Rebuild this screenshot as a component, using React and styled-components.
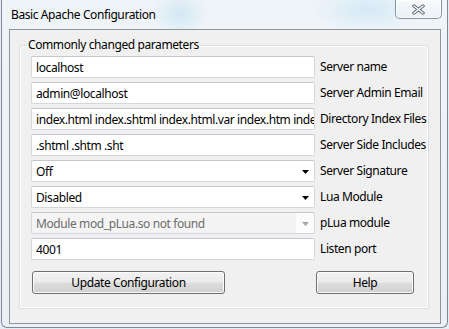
import React from 'react';
import styled, { createGlobalStyle } from 'styled-components';

const Global = createGlobalStyle`
  html, body { margin: 0; padding: 0; background: #e4edf5; }
  body { font-family: "Noto Sans", "Open Sans", sans-serif; font-size: 12px; letter-spacing: -0.4px; color: #000; }
  * { box-sizing: border-box; }
`;

const Window = styled.div`
  width: 447px;
  height: 328px;
  margin-left: 1px;
  display: flex;
  flex-direction: column;
  border: 1px solid #7f8993;
  border-top: none;
  border-radius: 0 0 6px 6px;
  padding: 0 6px 3px 7px;
  background:
    radial-gradient(ellipse 28px 22px at 178px 14px, rgba(175, 218, 240, 0.45), transparent),
    radial-gradient(ellipse 55px 22px at 365px 10px, rgba(185, 224, 245, 0.5), transparent),
    linear-gradient(#eff4f8, #ebf0f5);
`;

const TitleBar = styled.div`
  height: 29px;
  display: flex;
  align-items: flex-start;
  flex: none;
`;

const Title = styled.div`
  margin: 7px 0 0 2px;
  line-height: 16px;
  font-size: 12px;
`;

const CloseButton = styled.div`
  margin-left: auto;
  margin-right: -1px;
  width: 47px;
  height: 19px;
  border: 1px solid #8a949e;
  border-top: none;
  border-radius: 0 0 5px 5px;
  background: linear-gradient(rgba(255, 255, 255, 0.55), rgba(236, 241, 246, 0.6));
  box-shadow: inset 0 0 0 1px rgba(255, 255, 255, 0.6);
  display: flex;
  align-items: center;
  justify-content: center;
`;

const Client = styled.div`
  flex: 1;
  border: 1px solid #8d959d;
  background: #f0f0f0;
  display: flex;
  flex-direction: column;
`;

const Group = styled.fieldset`
  margin: 7px 11px 0 9px;
  padding: 3px 10px 14px 11px;
  border: 1px solid #d5dfe5;
  border-radius: 3px;
  box-shadow: inset 0 0 0 1px #fff;
  min-width: 0;
`;

const Legend = styled.legend`
  padding: 0 1px;
  margin-left: -4px;
  line-height: 16px;
  font-size: 12px;
`;

const Rows = styled.div`
  display: grid;
  grid-template-columns: 284px auto;
  column-gap: 5px;
  row-gap: 4px;
  align-items: center;
`;

const Field = styled.div`
  height: 22px;
  display: flex;
  align-items: center;
  padding: 0 0 0 4px;
  border: 1px solid #d4d7dc;
  border-top-color: #c4c7cd;
  border-radius: 2px;
  background: ${(p) => (p.$disabled ? 'linear-gradient(to right, #f4f4f4 264px, #fbfbfb 264px)' : '#fff')};
  color: ${(p) => (p.$disabled ? '#6d6d6d' : '#000')};
  overflow: hidden;
  white-space: nowrap;
`;

const FieldText = styled.span`
  flex: 1;
  min-width: 0;
  overflow: hidden;
  white-space: nowrap;
`;

const Arrow = styled.svg`
  flex: none;
  margin: 1px 5px 0 6px;
`;

const Label = styled.div`
  line-height: 22px;
  white-space: nowrap;
`;

const ButtonRow = styled.div`
  display: flex;
  gap: 91px;
  margin: 11px 0 0 1px;
`;

const Button = styled.button`
  width: ${(p) => p.$w}px;
  height: 23px;
  border: 1px solid #707070;
  border-radius: 3px;
  background: linear-gradient(#f2f2f2 0%, #ebebeb 48%, #dddddd 52%, #cfcfcf 100%);
  box-shadow: inset 0 0 0 1px #fbfbfb;
  font-family: inherit;
  font-size: 12px;
  letter-spacing: inherit;
  color: #000;
  padding: 0;
`;

const TextRow = ({ value, label }) => (
  <>
    <Field>
      <FieldText>{value}</FieldText>
    </Field>
    <Label>{label}</Label>
  </>
);

const ComboRow = ({ value, label, disabled }) => (
  <>
    <Field $disabled={disabled}>
      <FieldText>{value}</FieldText>
      <Arrow width="7" height="4" viewBox="0 0 7 4">
        <polygon points="0,0 7,0 3.5,4" fill={disabled ? '#a6a6a6' : '#000'} />
      </Arrow>
    </Field>
    <Label>{label}</Label>
  </>
);

export default function App() {
  return (
    <>
      <Global />
      <Window>
        <TitleBar>
          <Title>Basic Apache Configuration</Title>
          <CloseButton>
            <svg width="13" height="11" viewBox="0 0 13 11">
              <line x1="2" y1="2" x2="11" y2="9" stroke="#5f6b77" strokeWidth="3.4" strokeLinecap="round" />
              <line x1="11" y1="2" x2="2" y2="9" stroke="#5f6b77" strokeWidth="3.4" strokeLinecap="round" />
              <line x1="2" y1="2" x2="11" y2="9" stroke="#fff" strokeWidth="1.4" strokeLinecap="round" />
              <line x1="11" y1="2" x2="2" y2="9" stroke="#fff" strokeWidth="1.4" strokeLinecap="round" />
            </svg>
          </CloseButton>
        </TitleBar>
        <Client>
          <Group>
            <Legend>Commonly changed parameters</Legend>
            <Rows>
              <TextRow value="localhost" label="Server name" />
              <TextRow value="admin@localhost" label="Server Admin Email" />
              <TextRow value="index.html index.shtml index.html.var index.htm index.php" label="Directory Index Files" />
              <TextRow value=".shtml .shtm .sht" label="Server Side Includes" />
              <ComboRow value="Off" label="Server Signature" />
              <ComboRow value="Disabled" label="Lua Module" />
              <ComboRow value="Module mod_pLua.so not found" label="pLua module" disabled />
              <TextRow value="4001" label="Listen port" />
            </Rows>
            <ButtonRow>
              <Button $w={193}>Update Configuration</Button>
              <Button $w={98}>Help</Button>
            </ButtonRow>
          </Group>
        </Client>
      </Window>
    </>
  );
}
